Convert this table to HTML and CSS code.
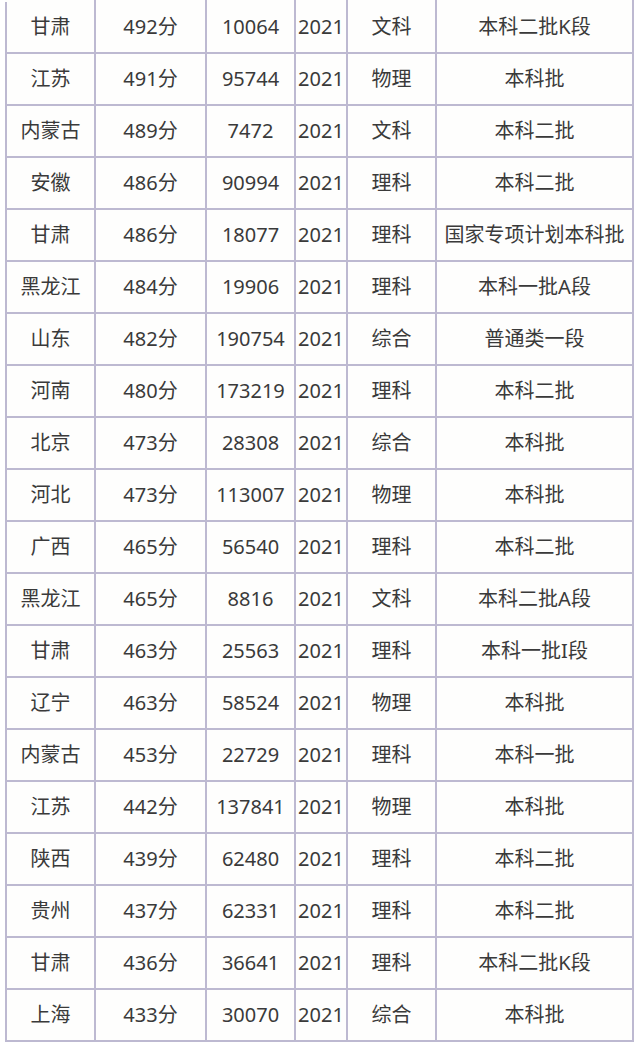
FILE: index.html
```html
<!DOCTYPE html>
<html lang="zh">
<head>
<meta charset="utf-8">
<link rel="stylesheet" href="styles.css">
</head>
<body>
<table class="scores">
<colgroup>
<col class="c1"><col class="c2"><col class="c3"><col class="c4"><col class="c5"><col class="c6">
</colgroup>
<tbody>
<tr class="first"><td>甘肃</td><td>492分</td><td>10064</td><td>2021</td><td>文科</td><td>本科二批K段</td></tr>
<tr><td>江苏</td><td>491分</td><td>95744</td><td>2021</td><td>物理</td><td>本科批</td></tr>
<tr><td>内蒙古</td><td>489分</td><td>7472</td><td>2021</td><td>文科</td><td>本科二批</td></tr>
<tr><td>安徽</td><td>486分</td><td>90994</td><td>2021</td><td>理科</td><td>本科二批</td></tr>
<tr><td>甘肃</td><td>486分</td><td>18077</td><td>2021</td><td>理科</td><td>国家专项计划本科批</td></tr>
<tr><td>黑龙江</td><td>484分</td><td>19906</td><td>2021</td><td>理科</td><td>本科一批A段</td></tr>
<tr><td>山东</td><td>482分</td><td>190754</td><td>2021</td><td>综合</td><td>普通类一段</td></tr>
<tr><td>河南</td><td>480分</td><td>173219</td><td>2021</td><td>理科</td><td>本科二批</td></tr>
<tr><td>北京</td><td>473分</td><td>28308</td><td>2021</td><td>综合</td><td>本科批</td></tr>
<tr><td>河北</td><td>473分</td><td>113007</td><td>2021</td><td>物理</td><td>本科批</td></tr>
<tr><td>广西</td><td>465分</td><td>56540</td><td>2021</td><td>理科</td><td>本科二批</td></tr>
<tr><td>黑龙江</td><td>465分</td><td>8816</td><td>2021</td><td>文科</td><td>本科二批A段</td></tr>
<tr><td>甘肃</td><td>463分</td><td>25563</td><td>2021</td><td>理科</td><td>本科一批I段</td></tr>
<tr><td>辽宁</td><td>463分</td><td>58524</td><td>2021</td><td>物理</td><td>本科批</td></tr>
<tr><td>内蒙古</td><td>453分</td><td>22729</td><td>2021</td><td>理科</td><td>本科一批</td></tr>
<tr><td>江苏</td><td>442分</td><td>137841</td><td>2021</td><td>物理</td><td>本科批</td></tr>
<tr><td>陕西</td><td>439分</td><td>62480</td><td>2021</td><td>理科</td><td>本科二批</td></tr>
<tr><td>贵州</td><td>437分</td><td>62331</td><td>2021</td><td>理科</td><td>本科二批</td></tr>
<tr><td>甘肃</td><td>436分</td><td>36641</td><td>2021</td><td>理科</td><td>本科二批K段</td></tr>
<tr><td>上海</td><td>433分</td><td>30070</td><td>2021</td><td>综合</td><td>本科批</td></tr>
</tbody>
</table>
</body>
</html>
```
FILE: styles.css
```css
html, body {
  margin: 0;
  padding: 0;
  background: #ffffff;
}
body {
  padding: 0 0 0 5px;
}
.scores {
  border-collapse: collapse;
  table-layout: fixed;
  width: 629px;
  background: #fefefd;
  font-family: "Noto Sans", "Noto Sans CJK SC", sans-serif;
  font-size: 20px;
  color: #3a3a3a;
}
.c1 { width: 89px; }
.c2 { width: 111px; }
.c3 { width: 89px; }
.c4 { width: 52px; }
.c5 { width: 89px; }
.c6 { width: 197px; }
.scores td {
  border: 2px solid #bdb9d1;
  height: 50px;
  padding: 0;
  text-align: center;
  vertical-align: middle;
  white-space: nowrap;
  line-height: 1;
}
.scores .first td {
  border-top-color: #fefefd;
}
```
